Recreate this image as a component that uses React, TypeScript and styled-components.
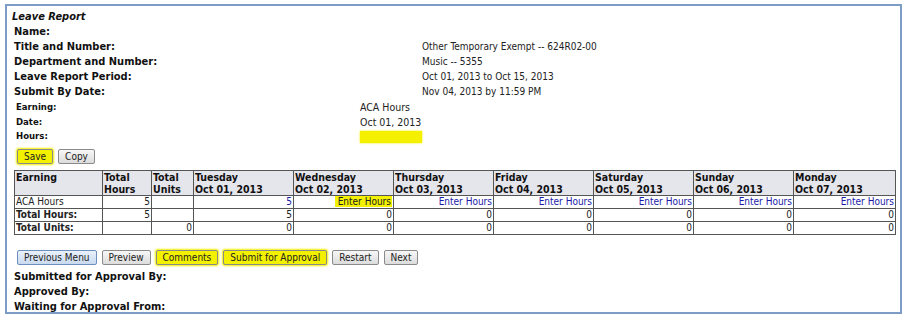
import styled, { createGlobalStyle } from "styled-components";

const GlobalStyle = createGlobalStyle`
  html, body {
    margin: 0;
    padding: 0;
    background: #ffffff;
  }
  body {
    font-family: "DejaVu Sans Condensed", "DejaVu Sans", Verdana, sans-serif;
    font-stretch: condensed;
    color: #111;
  }
`;

interface InfoRow {
  label: string;
  value: string;
}

const reportInfo: InfoRow[] = [
  { label: "Name:", value: "" },
  { label: "Title and Number:", value: "Other Temporary Exempt -- 624R02-00" },
  { label: "Department and Number:", value: "Music -- 5355" },
  { label: "Leave Report Period:", value: "Oct 01, 2013 to Oct 15, 2013" },
  { label: "Submit By Date:", value: "Nov 04, 2013 by 11:59 PM" },
];

const days = [
  { day: "Tuesday", date: "Oct 01, 2013", hours: "5", total: "5" },
  { day: "Wednesday", date: "Oct 02, 2013", hours: "", total: "0" },
  { day: "Thursday", date: "Oct 03, 2013", hours: "", total: "0" },
  { day: "Friday", date: "Oct 04, 2013", hours: "", total: "0" },
  { day: "Saturday", date: "Oct 05, 2013", hours: "", total: "0" },
  { day: "Sunday", date: "Oct 06, 2013", hours: "", total: "0" },
  { day: "Monday", date: "Oct 07, 2013", hours: "", total: "0" },
];

const dayWidths = [100, 100, 100, 100, 100, 100, 102];

export default function App() {
  return (
    <>
      <GlobalStyle />
      <Page>
        <Frame>
          <Title>Leave Report</Title>
          <InfoGrid>
            {reportInfo.map((row) => (
              <InfoLine key={row.label}>
                <Label>{row.label}</Label>
                <Value>{row.value}</Value>
              </InfoLine>
            ))}
          </InfoGrid>

          <DetailGrid>
            <DetailLine>
              <SmallLabel>Earning:</SmallLabel>
              <SmallValue>ACA Hours</SmallValue>
            </DetailLine>
            <DetailLine>
              <SmallLabel>Date:</SmallLabel>
              <SmallValue>Oct 01, 2013</SmallValue>
            </DetailLine>
            <DetailLine>
              <SmallLabel>Hours:</SmallLabel>
              <SmallValue>
                <HoursInput />
              </SmallValue>
            </DetailLine>
          </DetailGrid>

          <ButtonRow>
            <Button $highlight>Save</Button>
            <Button>Copy</Button>
          </ButtonRow>

          <Grid>
            <colgroup>
              <col style={{ width: 88 }} />
              <col style={{ width: 49 }} />
              <col style={{ width: 42 }} />
              {dayWidths.map((w, i) => (
                <col key={i} style={{ width: w }} />
              ))}
            </colgroup>
            <thead>
              <tr>
                <Th>Earning</Th>
                <Th>
                  Total
                  <br />
                  Hours
                </Th>
                <Th>
                  Total
                  <br />
                  Units
                </Th>
                {days.map((d) => (
                  <Th key={d.day}>
                    {d.day}
                    <br />
                    {d.date}
                  </Th>
                ))}
              </tr>
            </thead>
            <tbody>
              <tr>
                <Td>ACA Hours</Td>
                <Td $num>5</Td>
                <Td $num></Td>
                {days.map((d, i) => (
                  <Td key={d.day} $num>
                    <HoursLink $highlight={i === 1}>{d.hours || "Enter Hours"}</HoursLink>
                  </Td>
                ))}
              </tr>
              <tr>
                <Td $bold>Total Hours:</Td>
                <Td $num>5</Td>
                <Td $num></Td>
                {days.map((d) => (
                  <Td key={d.day} $num>
                    {d.total}
                  </Td>
                ))}
              </tr>
              <tr>
                <Td $bold>Total Units:</Td>
                <Td $num></Td>
                <Td $num>0</Td>
                {days.map((d) => (
                  <Td key={d.day} $num>
                    0
                  </Td>
                ))}
              </tr>
            </tbody>
          </Grid>

          <ActionRow>
            <Button $primary>Previous Menu</Button>
            <Button>Preview</Button>
            <Button $highlight>Comments</Button>
            <Button $highlight>Submit for Approval</Button>
            <Button>Restart</Button>
            <Button>Next</Button>
          </ActionRow>

          <Footer>
            <Label>Submitted for Approval By:</Label>
            <Label>Approved By:</Label>
            <Label>Waiting for Approval From:</Label>
          </Footer>
        </Frame>
      </Page>
    </>
  );
}

const Page = styled.div`
  padding: 4px 0 0 5px;
`;

const Frame = styled.div`
  box-sizing: border-box;
  width: 897px;
  height: 310px;
  border: 2px solid #7d9dc6;
  padding: 3px 0 0 5px;
`;

const Title = styled.div`
  font-size: 11px;
  font-weight: bold;
  font-style: italic;
  line-height: 15px;
  height: 15px;
`;

const InfoGrid = styled.div`
  display: flex;
  flex-direction: column;
  padding-left: 2px;
`;

const InfoLine = styled.div`
  display: grid;
  grid-template-columns: 408px auto;
  height: 15px;
  line-height: 15px;
`;

const Label = styled.div`
  font-size: 11px;
  font-weight: bold;
  line-height: 15px;
  white-space: nowrap;
`;

const Value = styled.div`
  font-size: 10px;
  line-height: 15px;
  color: #222;
`;

const DetailGrid = styled.div`
  display: flex;
  flex-direction: column;
  padding: 1px 0 0 4px;
`;

const DetailLine = styled.div`
  display: grid;
  grid-template-columns: 344px auto;
  height: 14.5px;
  line-height: 14px;
  align-items: center;
`;

const SmallLabel = styled.div`
  font-size: 9.5px;
  font-weight: bold;
`;

const SmallValue = styled.div`
  font-size: 10.5px;
  color: #222;
`;

const HoursInput = styled.div`
  width: 62px;
  height: 12px;
  background: #f5f000;
  box-shadow: 0 0 2px #f5f000;
  margin-top: 1px;
`;

const ButtonRow = styled.div`
  display: flex;
  gap: 5px;
  padding: 5px 0 0 5px;
  height: 15px;
`;

const Button = styled.button<{ $highlight?: boolean; $primary?: boolean }>`
  box-sizing: border-box;
  height: 15px;
  padding: 0 6px;
  font-family: "DejaVu Sans Condensed", "DejaVu Sans", Verdana, sans-serif;
  font-stretch: condensed;
  font-size: 10px;
  line-height: 13px;
  color: #222;
  border-radius: 2px;
  border: 1px solid ${(p) => (p.$primary ? "#6d8fbd" : "#8a8a8a")};
  background: ${(p) =>
    p.$highlight
      ? "#f3f000"
      : p.$primary
      ? "linear-gradient(#e9f1fb, #c9daef)"
      : "linear-gradient(#f7f7f7, #dcdcdc)"};
  box-shadow: ${(p) => (p.$highlight ? "0 0 2px 1px #f3f000" : "none")};
`;

const Grid = styled.table`
  margin: 6px 0 0 2px;
  width: 881px;
  border-collapse: collapse;
  table-layout: fixed;
  font-size: 10px;
  border: 1px solid #9a9a9a;
`;

const Th = styled.th`
  background: #e5e5ec;
  border: 1px solid #555;
  text-align: left;
  vertical-align: top;
  font-weight: bold;
  font-size: 10.5px;
  line-height: 12px;
  padding: 0 1px;
  height: 24px;
  box-sizing: border-box;
`;

const Td = styled.td<{ $num?: boolean; $bold?: boolean }>`
  border: 1px solid #555;
  text-align: ${(p) => (p.$num ? "right" : "left")};
  font-weight: ${(p) => (p.$bold ? "bold" : "normal")};
  font-size: 10px;
  line-height: 12px;
  padding: 0 1px;
  height: 13px;
  box-sizing: border-box;
  color: #222;
`;

const HoursLink = styled.span<{ $highlight?: boolean }>`
  color: ${(p) => (p.$highlight ? "#222" : "#1a1aa8")};
  background: ${(p) => (p.$highlight ? "#f3f000" : "transparent")};
  padding: ${(p) => (p.$highlight ? "0 1px 0 3px" : "0")};
`;

const ActionRow = styled.div`
  display: flex;
  gap: 5px;
  padding: 15px 0 0 5px;
`;

const Footer = styled.div`
  display: flex;
  flex-direction: column;
  padding: 4px 0 0 2px;
`;
